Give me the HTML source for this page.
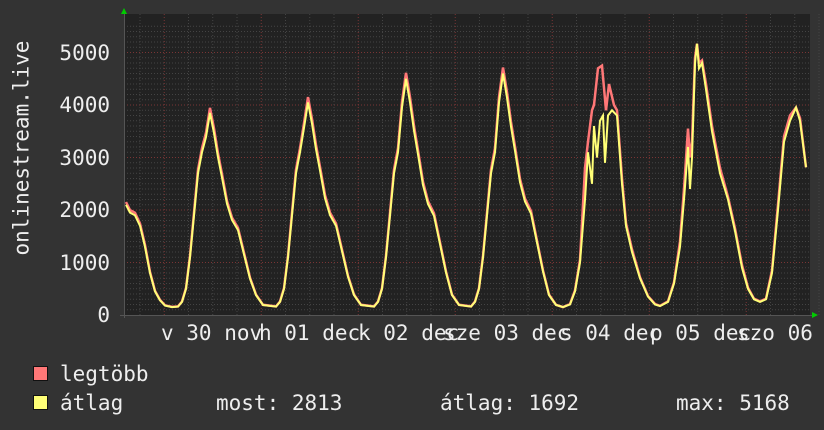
<!DOCTYPE html><html><head><meta charset="utf-8"><style>
body{margin:0;background:#333;width:824px;height:430px;overflow:hidden;position:relative;font-family:"DejaVu Sans Mono","Liberation Mono",monospace;color:#eee}
.t{position:absolute;font-size:21px;white-space:pre;line-height:1}
</style></head><body>
<svg id="s" width="824" height="430" style="position:absolute;left:0;top:0"></svg>
<div class="t" style="left:-68px;top:155px;transform:rotate(-90deg);width:180px;text-align:center">onlinestream.live</div>
<div class="t" style="left:40px;top:305px;width:70px;text-align:right">0</div>
<div class="t" style="left:40px;top:253px;width:70px;text-align:right">1000</div>
<div class="t" style="left:40px;top:200px;width:70px;text-align:right">2000</div>
<div class="t" style="left:40px;top:148px;width:70px;text-align:right">3000</div>
<div class="t" style="left:40px;top:95px;width:70px;text-align:right">4000</div>
<div class="t" style="left:40px;top:43px;width:70px;text-align:right">5000</div>
<div class="t" style="left:161px;top:323px">v 30 nov</div>
<div class="t" style="left:259px;top:323px">h 01 dec</div>
<div class="t" style="left:358px;top:323px">k 02 dec</div>
<div class="t" style="left:443px;top:323px">sze 03 dec</div>
<div class="t" style="left:560px;top:323px">s 04 dec</div>
<div class="t" style="left:650px;top:323px">p 05 dec</div>
<div class="t" style="left:737px;top:323px">szo 06 dec</div>
<div style="position:absolute;left:33px;top:366px;width:13px;height:13px;background:#ff7777;border:1px solid #111"></div>
<div style="position:absolute;left:33px;top:395px;width:13px;height:13px;background:#ffff77;border:1px solid #111"></div>
<div class="t" style="left:60px;top:364px">legtöbb</div>
<div class="t" style="left:60px;top:393px">átlag</div>
<div class="t" style="left:216px;top:393px">most: 2813</div>
<div class="t" style="left:440px;top:393px">átlag: 1692</div>
<div class="t" style="left:676px;top:393px">max: 5168</div>
<script>
var s=document.getElementById('s'),h='';
h+='<rect x="124" y="14" width="686" height="301" fill="#222"/>';
for(var v=100;v<5600;v+=100){var y=315-v*0.0525;var maj=v%1000==0;
h+='<line x1="124" x2="810" y1="'+y+'" y2="'+y+'" stroke="'+(maj?'#7a3535':'#444')+'" stroke-dasharray="1,2"/>';}
for(var i=0;i<29;i++){var x=140+i*24.25;var maj=(i%4==1);
h+='<line y1="14" y2="315" x1="'+x+'" x2="'+x+'" stroke="'+(maj?'#7a3535':'#444')+'" stroke-dasharray="1,2"/>';}
h+='<line x1="120" x2="812" y1="315.5" y2="315.5" stroke="#555"/><line x1="124.5" x2="124.5" y1="12" y2="318" stroke="#555"/>';
h+='<polygon points="121,14 127,14 124,8" fill="#0c0"/><polygon points="812,312 812,318 818,315" fill="#0c0"/>';
var Y=[[126,2100],[130,1950],[135,1900],[140,1700],[145,1300],[150,800],[155,450],[160,280],[165,180],[172,150]];
var R;
var mins=[172,270,368,465],P=[3850,4050,4500,4600];
var g=[[6,160],[10,250],[14,500],[18,1100],[22,1900],[26,2700],[30,3100],[34,-.88],[38,-1],[42,-.9],[46,-.78],[50,-.68],[55,-.55],[60,-.47],[66,-.42],[72,-.3],[78,-.18],[84,380],[91,190]];
for(var d=0;d<4;d++){g.forEach(function(k){Y.push([mins[d]+k[0],k[1]<0?-k[1]*P[d]:k[1]])});}
R=Y.map(function(p){return [p[0],p[1]*1.025]});
var y5=[[563,150],[570,200],[575,450],[580,1000],[585,2200],[588,3100],[592,2500],[594,3600],[597,3000],[600,3700],[603,3800],[605,2900],[608,3800],[612,3900],[617,3800],[622,2500],[626,1700],[632,1200],[640,700],[648,350],[655,200],[660,170],[668,250],[674,600],[680,1300],[684,2200],[688,3200],[690,2400],[692,3000],[695,4800],[697,5168],[699,4700],[702,4800],[706,4300],[712,3500],[720,2700],[728,2200],[735,1600],[742,900],[748,500],[754,300],[760,250],[766,300],[772,800],[778,2000],[784,3300],[790,3700],[796,3950],[800,3700],[806,2813]];
var r5=[[563,150],[570,210],[575,470],[580,1050],[585,2800],[588,3300],[592,3900],[594,4000],[598,4700],[602,4750],[606,3900],[609,4400],[614,4000],[617,3900],[622,2600],[626,1750],[632,1250],[640,720],[648,360],[655,210],[660,175],[668,260],[674,620],[680,1400],[684,2400],[688,3550],[690,3000],[692,3300],[695,4900],[697,5168],[699,4800],[702,4850],[706,4400],[712,3600],[720,2800],[728,2250],[735,1650],[742,950],[748,520],[754,310],[760,260],[766,310],[772,850],[778,2100],[784,3400],[790,3800],[796,3950],[800,3750],[806,2813]];
Y=Y.concat(y5);R=R.concat(r5);
function pts(a){return a.map(function(p){return p[0]+','+(315-p[1]*0.0525).toFixed(1)}).join(' ')}
h+='<polyline points="'+pts(R)+'" fill="none" stroke="#ff7777" stroke-width="2.5"/>';
h+='<polyline points="'+pts(Y)+'" fill="none" stroke="#ffff77" stroke-width="2"/>';
s.innerHTML=h;
</script>
</body></html>
